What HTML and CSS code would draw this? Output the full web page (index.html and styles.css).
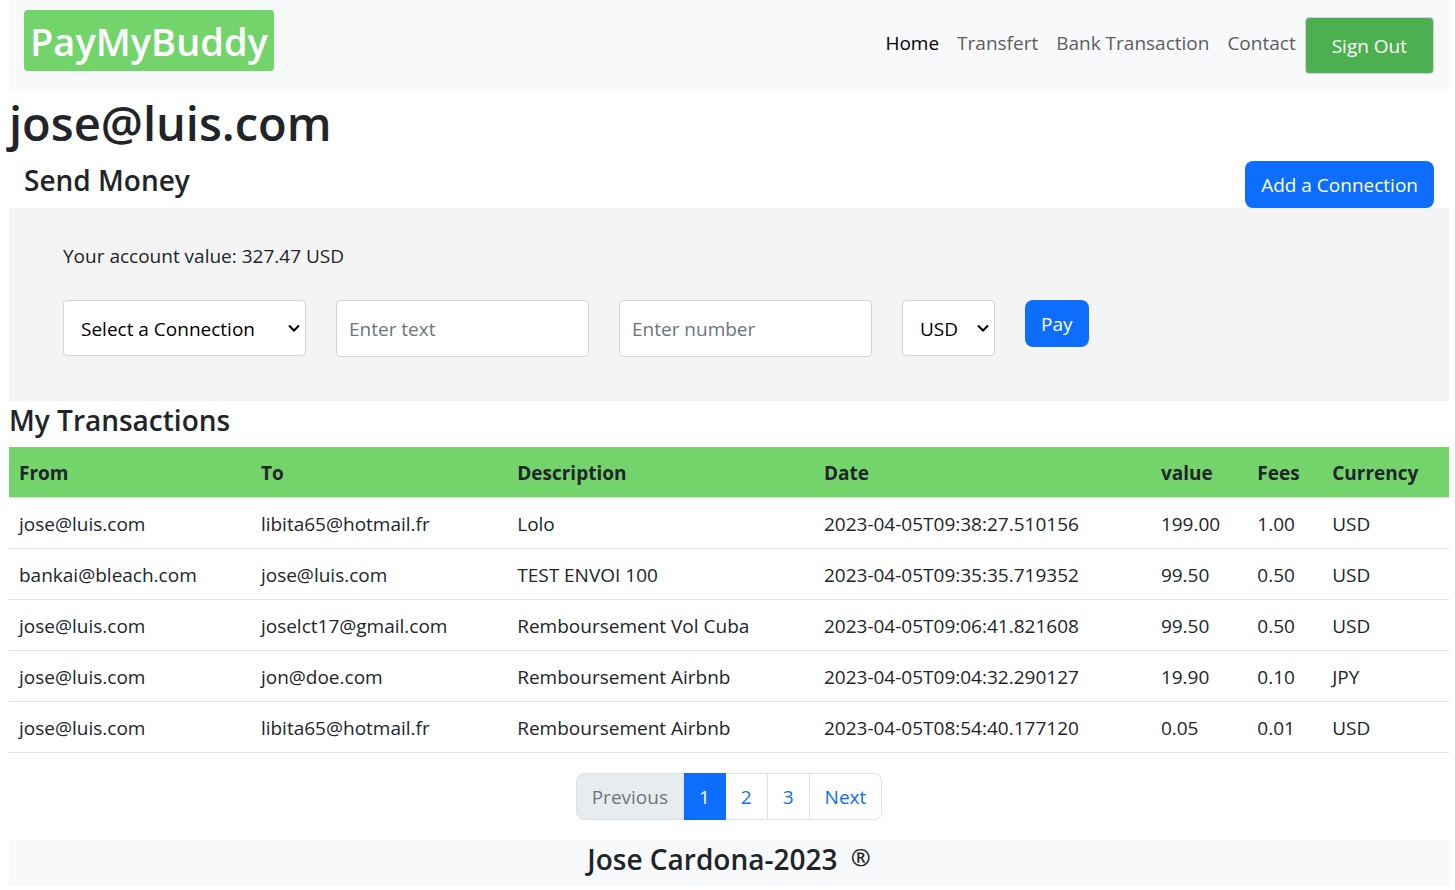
FILE: index.html
```html
<!DOCTYPE html>
<html lang="en">
<head>
  <meta charset="utf-8">
  <meta name="viewport" content="width=device-width, initial-scale=1">
  <title>PayMyBuddy</title>
  <link rel="stylesheet" href="styles.css">
</head>
<body>
  <header class="navbar">
    <a class="brand" href="#">PayMyBuddy</a>
    <nav class="nav">
      <a class="nav-link active" href="#">Home</a>
      <a class="nav-link" href="#">Transfert</a>
      <a class="nav-link" href="#">Bank Transaction</a>
      <a class="nav-link" href="#">Contact</a>
    </nav>
    <button class="sign-out" type="button">Sign Out</button>
  </header>

  <main>
    <h1 class="user">jose@luis.com</h1>

    <div class="section-head">
      <h2 class="title">Send Money</h2>
      <button class="btn" type="button">Add a Connection</button>
    </div>

    <section class="panel">
      <p class="balance">Your account value: 327.47 USD</p>
      <form class="pay-form">
        <select class="field connection" aria-label="Connection">
          <option>Select a Connection</option>
        </select>
        <input class="field" type="text" placeholder="Enter text" aria-label="Description">
        <input class="field" type="text" inputmode="decimal" placeholder="Enter number" aria-label="Amount">
        <select class="field currency" aria-label="Currency">
          <option>USD</option>
          <option>JPY</option>
        </select>
        <button class="btn" type="button">Pay</button>
      </form>
    </section>

    <h2 class="title">My Transactions</h2>
    <table class="transactions">
      <colgroup>
        <col class="col-from"><col class="col-to"><col class="col-description"><col class="col-date">
        <col class="col-value"><col class="col-fees"><col class="col-currency">
      </colgroup>
      <thead>
        <tr><th>From</th><th>To</th><th>Description</th><th>Date</th><th>value</th><th>Fees</th><th>Currency</th></tr>
      </thead>
      <tbody>
        <tr><td>jose@luis.com</td><td>libita65@hotmail.fr</td><td>Lolo</td><td>2023-04-05T09:38:27.510156</td><td>199.00</td><td>1.00</td><td>USD</td></tr>
        <tr><td>bankai@bleach.com</td><td>jose@luis.com</td><td>TEST ENVOI 100</td><td>2023-04-05T09:35:35.719352</td><td>99.50</td><td>0.50</td><td>USD</td></tr>
        <tr><td>jose@luis.com</td><td>joselct17@gmail.com</td><td>Remboursement Vol Cuba</td><td>2023-04-05T09:06:41.821608</td><td>99.50</td><td>0.50</td><td>USD</td></tr>
        <tr><td>jose@luis.com</td><td>jon@doe.com</td><td>Remboursement Airbnb</td><td>2023-04-05T09:04:32.290127</td><td>19.90</td><td>0.10</td><td>JPY</td></tr>
        <tr><td>jose@luis.com</td><td>libita65@hotmail.fr</td><td>Remboursement Airbnb</td><td>2023-04-05T08:54:40.177120</td><td>0.05</td><td>0.01</td><td>USD</td></tr>
      </tbody>
    </table>

    <nav class="pagination" aria-label="Transaction pages">
      <a class="page disabled" href="#" aria-disabled="true">Previous</a>
      <a class="page current" href="#" aria-current="page">1</a>
      <a class="page" href="#">2</a>
      <a class="page" href="#">3</a>
      <a class="page" href="#">Next</a>
    </nav>
  </main>

  <footer class="footer">
    <p class="title">Jose Cardona-2023 <span class="mark">®</span></p>
  </footer>
</body>
</html>
```
FILE: styles.css
```css
* {
  box-sizing: border-box;
}

body {
  margin: 0;
  padding: 0 6px 0 9px;
  background: #fff;
  color: #212529;
  font: 400 19px/30px "Open Sans", "Noto Sans", sans-serif;
}

button,
input,
select {
  margin: 0;
  font: inherit;
}

a {
  text-decoration: none;
}

.navbar {
  display: flex;
  align-items: flex-start;
  padding: 10px 15px 17px;
  background: #f8f9fa;
}

.brand {
  margin-right: auto;
  padding: 4px 6px 3px;
  border-radius: 4px;
  background: #74d46c;
  color: #fff;
  font-size: 38px;
  font-weight: 600;
  line-height: 54px;
}

.nav {
  display: flex;
  padding-top: 18px;
}

.nav-link {
  padding: 0 9px;
  color: #5b5e61;
}

.nav-link.active {
  color: #000;
}

.sign-out {
  margin-top: 7px;
  padding: 13px 26px 11px;
  border: 1px solid #ced4da;
  border-radius: 4px;
  background: #4caf50;
  color: #fff;
  line-height: 31px;
}

.user {
  margin: 0;
  padding: 2px 0 8px;
  font-size: 47px;
  font-weight: 600;
  line-height: 60px;
}

.section-head {
  display: flex;
  justify-content: space-between;
  padding: 0 15px;
}

.title {
  margin: 0;
  padding: 1px 0 9px;
  font-size: 28px;
  font-weight: 600;
  line-height: 36px;
}

.btn {
  padding: 9px 16px 7px;
  border: 0;
  border-radius: 8px;
  background: #0d6efd;
  color: #fff;
  line-height: 31px;
}

.panel {
  padding: 33px 54px 44px;
  background: #f4f4f4;
}

.balance {
  margin: 0 0 29px;
}

.pay-form {
  display: flex;
  flex-wrap: wrap;
  align-items: flex-start;
  gap: 30px;
}

.field {
  width: 253px;
  height: 57px;
  padding: 0 12px;
  border: 1px solid #ced4da;
  border-radius: 4px;
  background: #fff;
  color: #000;
}

.field::placeholder {
  color: #6c757d;
  opacity: 1;
}

select.field {
  height: 56px;
  padding: 1px 17px 0;
  appearance: none;
  background: #fff url("data:image/svg+xml,%3Csvg xmlns='http://www.w3.org/2000/svg' width='12' height='8'%3E%3Cpath d='M1 1.5L6 6.5L11 1.5' fill='none' stroke='%23000' stroke-width='2'/%3E%3C/svg%3E") no-repeat right 5px center;
}

select.connection {
  width: 243px;
}

select.currency {
  width: 93px;
}

.transactions {
  width: 100%;
  table-layout: fixed;
  border-collapse: separate;
  border-spacing: 0;
}

.col-from { width: 16.8%; }
.col-to { width: 17.8%; }
.col-description { width: 21.3%; }
.col-date { width: 23.4%; }
.col-value { width: 6.7%; }
.col-fees { width: 5.2%; }
.col-currency { width: 8.8%; }

.transactions th,
.transactions td {
  padding: 11px 10px 9px;
  border-bottom: 1px solid #dee2e6;
  text-align: left;
}

.transactions th {
  background: #74d46c;
  font-weight: 700;
}

.pagination {
  display: flex;
  justify-content: center;
  padding: 20px 0;
}

.page {
  padding: 9px 15px 7px;
  border: 1px solid #dee2e6;
  border-left-width: 0;
  color: #0d6efd;
  line-height: 29px;
}

.page:first-child {
  border-left-width: 1px;
  border-radius: 8px 0 0 8px;
}

.page:last-child {
  border-radius: 0 8px 8px 0;
}

.page.disabled {
  background: #e9ecef;
  color: #6c757d;
}

.page.current {
  border-color: #0d6efd;
  background: #0d6efd;
  color: #fff;
}

.footer {
  background: #f8f9fa;
  text-align: center;
}

.mark {
  margin-left: 6px;
  font-size: 24px;
  line-height: 1;
  vertical-align: 4px;
}
```
